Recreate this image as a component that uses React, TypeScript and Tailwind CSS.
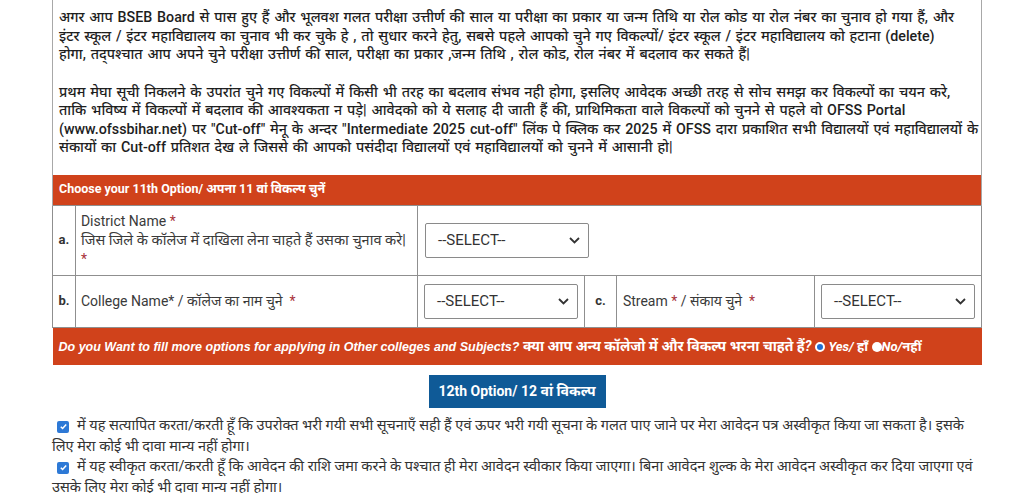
import React from "react";

const Star = () => <span className="text-[#a8323a]">*</span>;

function Sel({ w }: { w: string }) {
  return (
    <div className={`${w} h-[35px] border border-[#8a8a8a] rounded-[2px] bg-white flex items-center justify-between pl-[12px] pr-[8px] text-[15px] text-[#333]`}>
      <span>--SELECT--</span>
      <svg width="11" height="7" viewBox="0 0 11 7"><path d="M1 1l4.5 4.5L10 1" fill="none" stroke="#333" strokeWidth="1.8" /></svg>
    </div>
  );
}

function Check() {
  return (
    <span className="inline-flex items-center justify-center w-[12px] h-[12px] rounded-[2px] bg-[#2d79d6] align-[-1px] mr-[8px]">
      <svg width="9" height="9" viewBox="0 0 10 10"><path d="M2 5.2l2 2L8 2.8" fill="none" stroke="white" strokeWidth="1.7" /></svg>
    </span>
  );
}

export default function App() {
  const font = { fontFamily: '"Roboto", "Noto Sans", "Noto Sans Devanagari", sans-serif' };
  return (
    <div className="w-[1024px] h-[493px] bg-white overflow-hidden" style={font}>
      <div className="ml-[52px] w-[930px]">
        <div className="h-[175px] border-x border-[#a8a8a8] pl-[6px] pt-[8px] text-[14.25px] leading-[18.5px] [word-spacing:1.3px] text-[#1e1e1e] font-medium whitespace-nowrap overflow-hidden">
          <p>
            अगर आप BSEB Board से पास हुए हैं और भूलवश गलत परीक्षा उत्तीर्ण की साल या परीक्षा का प्रकार या जन्म तिथि या रोल कोड या रोल नंबर का चुनाव हो गया हैं, और<br />
            इंटर स्कूल / इंटर महाविद्यालय का चुनाव भी कर चुके हे , तो सुधार करने हेतु, सबसे पहले आपको चुने गए विकल्पों/ इंटर स्कूल / इंटर महाविद्यालय को हटाना (delete)<br />
            होगा, तद्पश्चात आप अपने चुने परीक्षा उत्तीर्ण की साल, परीक्षा का प्रकार ,जन्म तिथि , रोल कोड, रोल नंबर में बदलाव कर सकते हैं|
          </p>
          <p className="mt-[19px]">
            प्रथम मेघा सूची निकलने के उपरांत चुने गए विकल्पों में किसी भी तरह का बदलाव संभव नही होगा, इसलिए आवेदक अच्छी तरह से सोच समझ कर विकल्पों का चयन करे,<br />
            ताकि भविष्य में विकल्पों में बदलाव की आवश्यकता न पड़े| आवेदको को ये सलाह दी जाती हैं की, प्राथिमिकता वाले विकल्पों को चुनने से पहले वो OFSS Portal<br />
            (www.ofssbihar.net) पर "Cut-off" मेनू के अन्दर "Intermediate 2025 cut-off" लिंक पे क्लिक कर 2025 में OFSS दारा प्रकाशित सभी विद्यालयों एवं महाविद्यालयों के<br />
            संकायों का Cut-off प्रतिशत देख ले जिससे की आपको पसंदीदा विद्यालयों एवं महाविद्यालयों को चुनने में आसानी हो|
          </p>
        </div>
        <table className="w-[930px] border-collapse text-[14px] text-[#3a3a3a]">
          <tbody>
            <tr>
              <td colSpan={6} className="h-[30px] bg-[#d0421b] text-white font-bold text-[12.5px] px-[6px] border-x border-[#a8a8a8]">
                Choose your 11th Option/ अपना 11 वां विकल्प चुनें
              </td>
            </tr>
            <tr className="h-[70px]">
              <td className="w-[23px] border border-[#8f8f8f] text-center font-bold text-[13px] text-[#333]">a.</td>
              <td className="w-[344px] border border-[#8f8f8f] px-[5px] leading-[19px]">
                <div>District Name <Star /></div>
                <div className="text-[14.5px]">जिस जिले के कॉलेज में दाखिला लेना चाहते हैं उसका चुनाव करे|</div>
                <div><Star /></div>
              </td>
              <td colSpan={4} className="border border-[#8f8f8f] px-[7px]">
                <Sel w="w-[164px]" />
              </td>
            </tr>
            <tr className="h-[52px]">
              <td className="border border-[#8f8f8f] text-center font-bold text-[13px] text-[#333]">b.</td>
              <td className="border border-[#8f8f8f] px-[5px]">College Name* / कॉलेज का नाम चुने &nbsp;<Star /></td>
              <td className="w-[165px] border border-[#8f8f8f] px-[6px]">
                <Sel w="w-[154px]" />
              </td>
              <td className="w-[32px] border border-[#8f8f8f] text-center font-bold text-[13px] text-[#333]">c.</td>
              <td className="w-[199px] border border-[#8f8f8f] px-[6px]">Stream <Star /> / संकाय चुने &nbsp;<Star /></td>
              <td className="border border-[#8f8f8f] px-[6px]">
                <Sel w="w-[154px]" />
              </td>
            </tr>
            <tr>
              <td colSpan={6} className="h-[38px] bg-[#d0421b] text-white font-bold italic px-[6px] whitespace-nowrap">
                <span className="text-[12.5px]" style={{ fontFamily: '"Liberation Sans", Arial, sans-serif' }}>Do you Want to fill more options for applying in Other colleges and Subjects?</span>{" "}
                <span className="text-[14px]">क्या आप अन्य कॉलेजो में और विकल्प भरना चाहते हैं?</span>{" "}
                <span className="inline-block w-[10px] h-[10px] rounded-full bg-[#1f6fd1] border-2 border-white align-[-1px]" />{" "}
                <span className="text-[13px]">Yes/ हाँ</span>{" "}
                <span className="inline-block w-[10px] h-[10px] rounded-full bg-white align-[-1px]" />
                <span className="text-[13px]">No/नहीं</span>
              </td>
            </tr>
          </tbody>
        </table>
        <div className="flex justify-center mt-[10px]">
          <div className="h-[33px] w-[177px] bg-[#0f5a97] text-white font-bold text-[14px] flex items-center justify-center">
            12th Option/ 12 वां विकल्प
          </div>
        </div>
        <div className="mt-[8px] text-[14.5px] leading-[20.5px] text-[#333]">
          <p><span className="ml-[5px]" /><Check />में यह सत्यापित करता/करती हूँ कि उपरोक्त भरी गयी सभी सूचनाएँ सही हैं एवं ऊपर भरी गयी सूचना के गलत पाए जाने पर मेरा आवेदन पत्र अस्वीकृत किया जा सकता है। इसके लिए मेरा कोई भी दावा मान्य नहीं होगा।</p>
          <p><span className="ml-[5px]" /><Check />में यह स्वीकृत करता/करती हूँ कि आवेदन की राशि जमा करने के पश्चात ही मेरा आवेदन स्वीकार किया जाएगा। बिना आवेदन शुल्क के मेरा आवेदन अस्वीकृत कर दिया जाएगा एवं उसके लिए मेरा कोई भी दावा मान्य नहीं होगा।</p>
        </div>
      </div>
    </div>
  );
}
